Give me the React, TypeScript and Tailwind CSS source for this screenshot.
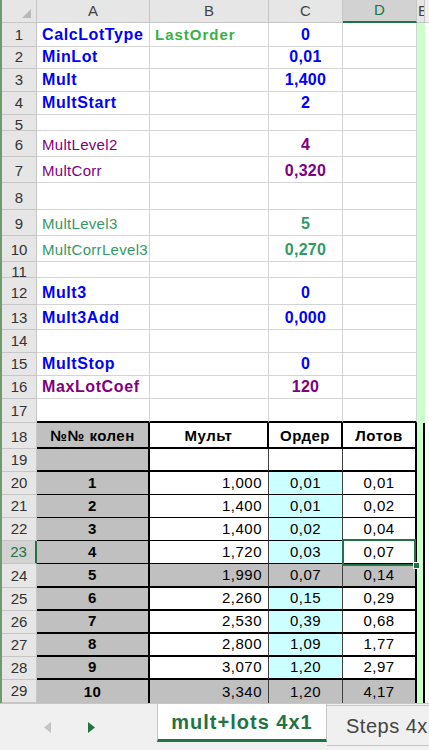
import React from "react";

const FONT = "font-['Liberation_Sans',Arial,sans-serif]";

const blueL = "text-[#0000ff] font-bold text-[16px] tracking-[0.6px]";
const blueV = "text-[#0000ff] font-bold text-[16px] tracking-[0.3px]";
const purpL = "text-[#800080] text-[15px] tracking-[0.3px]";
const purpLB = "text-[#800080] font-bold text-[16px] tracking-[0.6px]";
const purpV = "text-[#800080] font-bold text-[16px] tracking-[0.3px]";
const tealL = "text-[#339966] text-[15px] tracking-[0.3px]";
const tealV = "text-[#339966] font-bold text-[16px] tracking-[0.3px]";
const greenB = "text-[#3cb043] font-bold text-[15px] tracking-[1px]";

function RowHead({ n, short, sel }: { n: number; short?: boolean; sel?: boolean }) {
  if (sel)
    return (
      <div className="flex items-end justify-center pb-[2px] leading-[18px] bg-[#d2d2d2] border-b border-b-[#c6c6c6] border-r-2 border-r-[#217346] text-[15px] text-[#217346]">
        {n}
      </div>
    );
  if (short)
    return (
      <div className="flex items-start justify-center overflow-hidden leading-[20px] bg-[#e6e6e6] border-r border-b border-[#c6c6c6] text-[15px] text-[#333]">
        {n}
      </div>
    );
  return (
    <div className="flex items-end justify-center pb-[2px] leading-[18px] bg-[#e6e6e6] border-r border-b border-[#c6c6c6] text-[15px] text-[#333]">
      {n}
    </div>
  );
}

type TopProps = {
  n: number;
  a?: string;
  aC?: string;
  b?: string;
  bC?: string;
  c?: string;
  cC?: string;
  short?: boolean;
  last?: boolean;
};

function TopRow({ n, a, aC, b, bC, c, cC, short, last }: TopProps) {
  const g = last
    ? "border-r border-r-[#d4d4d4] border-b-2 border-b-black bg-white"
    : "border-r border-b border-[#d4d4d4] bg-white";
  const base = "flex items-end whitespace-nowrap leading-[18px] pb-[2px]";
  return (
    <>
      <RowHead n={n} short={short} />
      <div className={`${base} ${g} pl-[5px]`}>
        {a && <span className={aC}>{a}</span>}
      </div>
      <div className={`${base} ${g} pl-[5px]`}>
        {b && <span className={bC}>{b}</span>}
      </div>
      <div className={`${base} ${g} justify-center`}>
        {c && <span className={cC}>{c}</span>}
      </div>
      <div className={`${base} ${g}`} />
      <div className="bg-[#ccffcc]" />
      <div className="bg-white" />
    </>
  );
}

type TProps = {
  n: number;
  a?: string;
  b?: string;
  c?: string;
  d?: string;
  gray?: boolean;
  thick?: boolean;
  last?: boolean;
  sel?: boolean;
  header?: boolean;
  cWhite?: boolean;
};

function TRow({ n, a, b, c, d, gray, thick, last, sel, header, cWhite }: TProps) {
  const bb = last ? "border-b-0" : thick ? "border-b-2 border-b-black" : "border-b border-b-black";
  const base = "flex items-end whitespace-nowrap leading-[18px] pb-[2px] text-black text-[15px] tracking-[0.5px]";
  const bBg = gray ? "bg-[#c0c0c0]" : "bg-white";
  const cBg = gray ? "bg-[#c0c0c0]" : cWhite ? "bg-white" : "bg-[#ccffff]";
  const hdr = header ? "font-bold" : "";
  return (
    <>
      <RowHead n={n} sel={sel} />
      <div className={`${base} ${bb} bg-[#c0c0c0] border-r-2 border-r-black justify-center font-bold`}>{a}</div>
      <div className={`${base} ${bb} ${bBg} ${hdr} ${header ? "border-r-2 border-r-black justify-center" : "border-r border-r-[#404040] justify-end pr-[6px]"}`}>{b}</div>
      <div className={`${base} ${bb} ${cBg} ${hdr} ${header ? "border-r-2 border-r-black" : "border-r border-r-[#404040]"} justify-center`}>{c}</div>
      <div className={`${base} ${bb} ${bBg} ${hdr} border-r-2 border-r-black justify-center relative`}>
        {d}
        {sel && (
          <>
            <div className="absolute -left-[1px] -top-[2px] -right-[1px] -bottom-[3px] border-2 border-[#217346] z-10" />
            <div className="absolute -right-[5px] -bottom-[6px] w-[7px] h-[7px] bg-[#217346] border border-white z-20" />
          </>
        )}
      </div>
      <div className="bg-[#ccffcc] border-r-2 border-r-black" />
      <div className="bg-white" />
    </>
  );
}

export default function App() {
  const data: [string, string, string, string][] = [
    ["1", "1,000", "0,01", "0,01"],
    ["2", "1,400", "0,01", "0,02"],
    ["3", "1,400", "0,02", "0,04"],
    ["4", "1,720", "0,03", "0,07"],
    ["5", "1,990", "0,07", "0,14"],
    ["6", "2,260", "0,15", "0,29"],
    ["7", "2,530", "0,39", "0,68"],
    ["8", "2,800", "1,09", "1,77"],
    ["9", "3,070", "1,20", "2,97"],
    ["10", "3,340", "1,20", "4,17"],
  ];
  return (
    <div className={`${FONT} w-[429px] h-[750px] overflow-hidden bg-white flex flex-col`}>
      <div className="flex h-[703px]">
        <div className="w-[2px] bg-[#6e9a6e]" />
        <div className="flex-1 grid grid-cols-[35px_113px_119px_74px_74px_8px_1fr] grid-rows-[23px_24px_22px_23px_23px_16px_26px_26px_27px_26px_26px_16px_27px_25px_23px_23px_23px_24px_26px_23px_23px_23px_23px_23px_24px_23px_23px_23px_23px_23px]">
          {/* column headers */}
          <div className="flex items-end justify-end pr-[5px] pb-[4px] bg-[#e6e6e6] border-r border-b border-[#c6c6c6]">
            <svg width="9" height="9" viewBox="0 0 9 9">
              <polygon points="9,0 9,9 0,9" fill="#b9b9b9" />
            </svg>
          </div>
          <div className="flex items-center justify-center bg-[#e6e6e6] border-r border-b border-[#c6c6c6] text-[15px] text-[#444]">A</div>
          <div className="flex items-center justify-center bg-[#e6e6e6] border-r border-b border-[#c6c6c6] text-[15px] text-[#444]">B</div>
          <div className="flex items-center justify-center bg-[#e6e6e6] border-r border-b border-[#c6c6c6] text-[15px] text-[#444]">C</div>
          <div className="flex items-center justify-center bg-[#d2d2d2] border-r border-r-[#c6c6c6] border-b-2 border-b-[#217346] text-[15px] text-[#217346]">D</div>
          <div className="flex items-center overflow-hidden bg-[#e6e6e6] border-r border-b border-[#c6c6c6] text-[15px] text-[#444] pl-[1px]">E</div>
          <div className="bg-[#f0f0f0] border-b border-[#c6c6c6]" />

          <TopRow n={1} a="CalcLotType" aC={blueL} b="LastOrder" bC={greenB} c="0" cC={blueV} />
          <TopRow n={2} a="MinLot" aC={blueL} c="0,01" cC={blueV} />
          <TopRow n={3} a="Mult" aC={blueL} c="1,400" cC={blueV} />
          <TopRow n={4} a="MultStart" aC={blueL} c="2" cC={blueV} />
          <TopRow n={5} short />
          <TopRow n={6} a="MultLevel2" aC={purpL} c="4" cC={purpV} />
          <TopRow n={7} a="MultCorr" aC={purpL} c="0,320" cC={purpV} />
          <TopRow n={8} />
          <TopRow n={9} a="MultLevel3" aC={tealL} c="5" cC={tealV} />
          <TopRow n={10} a="MultCorrLevel3" aC={tealL} c="0,270" cC={tealV} />
          <TopRow n={11} short />
          <TopRow n={12} a="Mult3" aC={blueL} c="0" cC={blueV} />
          <TopRow n={13} a="Mult3Add" aC={blueL} c="0,000" cC={blueV} />
          <TopRow n={14} />
          <TopRow n={15} a="MultStop" aC={blueL} c="0" cC={blueV} />
          <TopRow n={16} a="MaxLotCoef" aC={purpLB} c="120" cC={purpV} />
          <TopRow n={17} last />

          <TRow n={18} a="№№ колен" b="Мульт" c="Ордер" d="Лотов" header thick cWhite />
          <TRow n={19} thick cWhite />
          {data.map((r, i) => {
            const n = i + 20;
            const gray = r[0] === "5" || r[0] === "10";
            return (
              <TRow
                key={n}
                n={n}
                a={r[0]}
                b={r[1]}
                c={r[2]}
                d={r[3]}
                gray={gray}
                thick={i >= 4}
                last={i === 9}
                sel={n === 23}
              />
            );
          })}
        </div>
      </div>

      {/* sheet tabs */}
      <div className="h-[47px] bg-[#f0f0f0] border-t border-[#c6c6c6] flex items-start">
        <div className="w-[157px] h-full flex items-center">
          <svg className="ml-[44px]" width="7" height="11" viewBox="0 0 7 11">
            <polygon points="7,0 7,11 0,5.5" fill="#c4c4c4" />
          </svg>
          <svg className="ml-[37px]" width="7" height="11" viewBox="0 0 7 11">
            <polygon points="0,0 0,11 7,5.5" fill="#217346" />
          </svg>
        </div>
        <div className="w-[170px] h-[38px] bg-white border-l border-r border-[#c6c6c6] border-b-[3px] border-b-[#217346] flex items-center justify-center text-[#217346] font-bold text-[20px] tracking-[1px] whitespace-nowrap">
          mult+lots 4x1
        </div>
        <div className="flex-1 mt-[1px] h-[41px] border-t border-b border-[#c6c6c6] flex items-center pl-[19px] text-[20px] text-[#444] tracking-[0.5px] whitespace-nowrap overflow-hidden">
          Steps 4x1
        </div>
      </div>
    </div>
  );
}
